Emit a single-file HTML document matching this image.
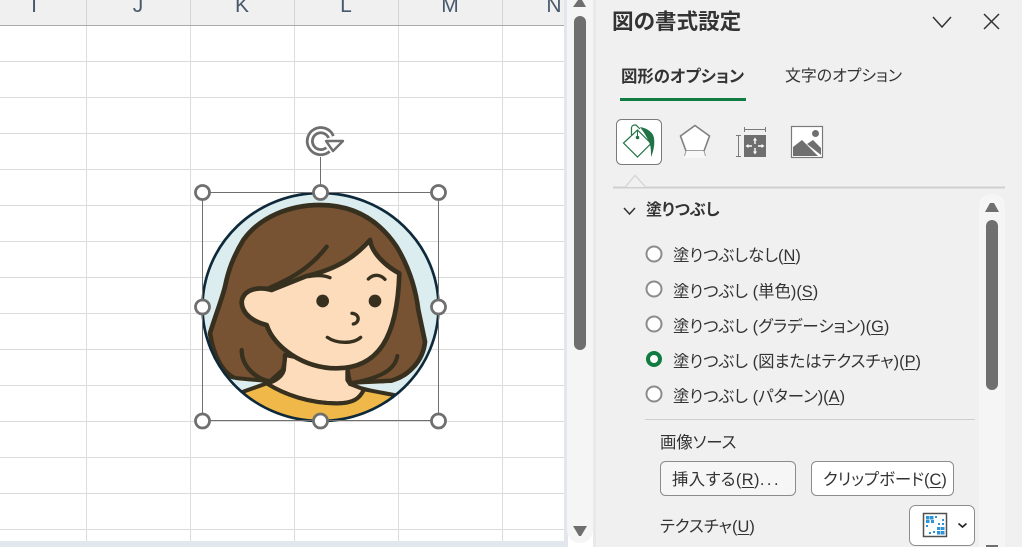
<!DOCTYPE html>
<html lang="ja"><head><meta charset="utf-8">
<style>
html,body{margin:0;padding:0;width:1022px;height:547px;overflow:hidden;background:#fff}
body{position:relative;font-family:"Liberation Sans","Noto Sans CJK JP",sans-serif;color:#333}
.a{position:absolute}
.t{position:absolute;white-space:nowrap;font-size:16.4px;line-height:20px;color:#333;font-feature-settings:"palt"}
.h{position:absolute;top:-6px;width:40px;text-align:center;font-size:21px;line-height:24px;color:#48596c}
u{text-underline-offset:2px}
svg{position:absolute;left:0;top:0}
</style></head><body>
<svg width="1022" height="547" viewBox="0 0 1022 547">
<!-- grid -->
<rect x="0" y="0" width="565" height="25" fill="#f0f0f0"/>
<g stroke="#dcdcdc" stroke-width="1">
<path d="M0 61.5H565M0 97.5H565M0 133.5H565M0 169.5H565M0 205.5H565M0 241.5H565M0 277.5H565M0 313.5H565M0 349.5H565M0 385.5H565M0 421.5H565M0 457.5H565M0 493.5H565M0 529.5H565"/>
<path d="M86.5 25V541M190.5 25V541M294.5 25V541M398.5 25V541M502.5 25V541"/>
<path stroke="#d6d6d6" d="M86.5 0V25M190.5 0V25M294.5 0V25M398.5 0V25M502.5 0V25"/>
</g>
<rect x="0" y="25" width="565" height="1" fill="#a9a9a9"/>
<!-- left scrollbar -->
<rect x="0" y="541" width="568" height="6" fill="#e2e7ee"/>
<rect x="564" y="0" width="4" height="547" fill="#e2e7ee"/>
<path d="M567 0H593V530a13 13 0 0 1-13 13a13 13 0 0 1-13-13Z" fill="#f5f5f5"/>
<rect x="593" y="0" width="3" height="547" fill="#e9e9e9"/>
<rect x="574" y="16" width="12" height="334" rx="6" fill="#6f6f6f"/>
<path d="M573 7L578 0H582L586 7Z" fill="#6f6f6f"/>
<path d="M573 526H587L581 536H579Z" fill="#6f6f6f"/>
<!-- panel -->
<rect x="596" y="0" width="426" height="547" fill="#f0f0f0"/>
<path d="M933 17L942 27L951 17" fill="none" stroke="#333" stroke-width="1.5"/>
<path d="M984 14L999 29M999 14L984 29" fill="none" stroke="#333" stroke-width="1.5"/>
<rect x="620" y="98" width="126" height="3" fill="#107c41"/>
<!-- icon buttons -->
<rect x="616.5" y="119.5" width="45" height="45" rx="5" fill="#fff" stroke="#7a7a7a"/>
<path d="M640 127C646 128 651 131 653 135C655 139 655 148 651 157C651 151 651 146 649 142C647 137 643 131 640 127Z" fill="#217346"/>
<path d="M637.500 130L651 143.500L637.500 157L623.500 143Z" fill="none" stroke="#217346" stroke-width="1.200"/>
<path d="M631.500 135V128a3 3 0 0 1 3-3H636L640 129" fill="none" stroke="#217346" stroke-width="1.200"/>
<path d="M637.500 137V130" fill="none" stroke="#217346" stroke-width="1"/>
<circle cx="637.500" cy="137.500" r="1.800" fill="#217346"/>
<path d="M695 125.500L709.500 136L704 151H686L680.500 136Z" fill="#fff" stroke="#808080" stroke-width="1.600"/>
<path d="M686 151L684 158H706L704 151Z" fill="#f8f8f8"/>
<path d="M686 151L684.500 156M704 151L705.500 156" stroke="#a0a0a0" fill="none"/>
<rect x="744" y="135" width="22" height="22" fill="#6f6f6f"/>
<path d="M744.500 127V132M765.500 127V132M744.500 129.500H765.500M736 135.500H741M736 156.500H741M738.500 135.500V156.500" stroke="#7a7a7a" fill="none"/>
<path d="M755 139V144M755 148V153M747 146H752M758 146H763" stroke="#fff" stroke-width="1.400" fill="none"/>
<path d="M755 137.500L757 140.500H753ZM755 154.500L757 151.500H753ZM745.500 146L748.500 144V148ZM764.500 146L761.500 144V148Z" fill="#fff"/>
<rect x="791.500" y="126.500" width="31" height="31" fill="#fff" stroke="#7a7a7a" stroke-width="1.200"/>
<circle cx="815.500" cy="133.500" r="3.500" fill="#6f6f6f"/>
<path d="M793 147L802 140L818 156H793Z" fill="#6f6f6f"/>
<path d="M807 144L813 140L821 148V155Z" fill="#6f6f6f"/>
<path d="M613 186.500H625L635 174.500L646 186.500H1005V188.500H613Z" fill="#cfcfcf"/>
<path d="M625.500 187L635 175.500L645.500 187" fill="#f0f0f0" stroke="#d4d4d4"/>
<path d="M624 208L629.500 214L635 208" fill="none" stroke="#333" stroke-width="1.500"/>
<!-- radios -->
<g fill="#fff" stroke="#8c8c8c" stroke-width="2">
<circle cx="654" cy="254" r="7.500"/><circle cx="654" cy="289" r="7.500"/><circle cx="654" cy="324" r="7.500"/><circle cx="654" cy="394" r="7.500"/>
</g>
<circle cx="654" cy="359" r="6" fill="#fff" stroke="#107c41" stroke-width="4"/>
<!-- right scrollbar -->
<path d="M979 204a13 10 0 0 1 26 0V547H979Z" fill="#f5f5f5"/>
<path d="M985 212L990 203H994L999 212Z" fill="#6f6f6f"/>
<rect x="986" y="220" width="12" height="170" rx="6" fill="#6f6f6f"/>
<rect x="986" y="545" width="12" height="2" fill="#6f6f6f"/>
<rect x="645" y="419" width="330" height="1" fill="#cfcfcf"/>
<!-- buttons -->
<rect x="660.500" y="461.500" width="135" height="34" rx="5" fill="#f6f6f6" stroke="#8c8c8c"/>
<rect x="811.500" y="461.500" width="142" height="34" rx="5" fill="#fff" stroke="#8c8c8c"/>
<rect x="909.500" y="505.500" width="65" height="40" rx="6" fill="#fff" stroke="#8c8c8c"/>
<rect x="923.500" y="513.500" width="23" height="23" fill="#fff" stroke="#505050" stroke-width="1.500"/>
<g fill="#2f93d8">
<rect x="926" y="516" width="3.500" height="3.500"/><rect x="930" y="516" width="3.500" height="3.500"/><rect x="935" y="516" width="2" height="2"/><rect x="926" y="520" width="3.500" height="3"/><rect x="931" y="520" width="3" height="3"/><rect x="926" y="525" width="2" height="2"/>
<rect x="942" y="519" width="2" height="2"/><rect x="938" y="523" width="2" height="2"/><rect x="942" y="523" width="2" height="2"/><rect x="937" y="527" width="3.500" height="3"/><rect x="941" y="527" width="3.500" height="3"/><rect x="933" y="531" width="2" height="2"/><rect x="937" y="531" width="3.500" height="3.500"/><rect x="941" y="531" width="3.500" height="3.500"/><rect x="929" y="532" width="2" height="2"/>
</g>
<path d="M958.500 523.500L962.500 527L966.500 523.500" fill="none" stroke="#222" stroke-width="1.600"/>
<!-- rotate handle -->
<path d="M320.500 157V185" stroke="#6f6f6f" stroke-width="1"/>
<path d="M328 149.500A11 11 0 1 1 331 137" fill="none" stroke="#6f6f6f" stroke-width="8"/>
<path d="M328 149.500A11 11 0 1 1 331 137" fill="none" stroke="#fff" stroke-width="2.400"/>
<path d="M326 141H343L333 151Z" fill="#fff" stroke="#6f6f6f" stroke-width="2.400" stroke-linejoin="round"/>
<!-- picture -->
<defs><clipPath id="c"><ellipse cx="391.500" cy="561" rx="354" ry="342"/></clipPath></defs>
<g transform="translate(190 120) scale(.33333)">
<ellipse cx="391.500" cy="561" rx="354" ry="342" fill="#dcedef"/>
<g clip-path="url(#c)" stroke-linejoin="round" stroke-linecap="round">
<path d="M160 815L230 790L300 800H480L520 805L612 825L620 930H150Z" fill="#f0b849" stroke="#37301f" stroke-width="10"/>
<path d="M60 640C75 590 95 540 105 500C115 450 130 410 160 360C210 290 300 255 390 255C480 255 560 290 620 380C650 430 675 490 685 570L705 665C700 720 660 765 605 782L480 790L470 745H285L240 785L135 775C100 760 70 710 60 640Z" fill="#775333" stroke="#37301f" stroke-width="14"/>
<path d="M105 774L145 781L222 788L160 812L120 790Z" fill="#dcedef"/>
<path d="M495 794L605 789L650 774L640 810L612 825L520 800Z" fill="#dcedef"/>
<path d="M285 705L282 750C275 775 250 785 230 790C285 825 360 850 440 850C490 850 510 835 522 808L480 792L472 742Z" fill="#fddcbc" stroke="#37301f" stroke-width="12"/>
<path d="M160 815L230 790C285 825 360 850 440 850C490 850 510 835 522 808L612 825" fill="none" stroke="#37301f" stroke-width="12"/>
<path d="M245 510C200 498 160 510 155 545C155 582 190 605 230 615C250 680 340 745 440 745C560 745 622 660 628 460C590 440 545 400 540 360C500 405 450 445 350 468L245 510Z" fill="#fddcbc" stroke="#37301f" stroke-width="14"/>
<path d="M410 380C370 432 320 470 235 505" fill="none" stroke="#37301f" stroke-width="13"/>
<path d="M155 690C155 740 200 780 245 785C275 775 285 740 285 705" fill="none" stroke="#37301f" stroke-width="13"/>
<path d="M622 708C615 750 570 775 480 790M472 745L472 780L480 792M605 782C640 770 655 760 665 745" fill="none" stroke="#37301f" stroke-width="12"/>
<path d="M355 470C380 465 400 465 420 473M535 477C550 462 570 462 585 478" fill="none" stroke="#37301f" stroke-width="10"/>
<path d="M486 580C510 582 510 608 490 612M412 652C440 672 490 672 512 652" fill="none" stroke="#37301f" stroke-width="10"/>
<circle cx="398" cy="543" r="19" fill="#37301f"/><circle cx="555" cy="543" r="19" fill="#37301f"/>
</g>
<ellipse cx="391.500" cy="561" rx="354" ry="342" fill="none" stroke="#0e2a3a" stroke-width="8"/>
</g>
<rect x="202.500" y="192.500" width="236" height="228" fill="none" stroke="#6f6f6f" stroke-width="1"/>
<g fill="#fff" stroke="#6f6f6f" stroke-width="2.800">
<circle cx="202.500" cy="192.500" r="7"/><circle cx="320.500" cy="192.500" r="7"/><circle cx="438.500" cy="192.500" r="7"/>
<circle cx="202.500" cy="307" r="7"/><circle cx="438.500" cy="307" r="7"/>
<circle cx="202.500" cy="421" r="7"/><circle cx="320.500" cy="421" r="7"/><circle cx="438.500" cy="421" r="7"/>
</g>
</svg>
<div class="a" style="left:0;top:0;width:565px;height:25px;overflow:hidden">
<div class="h" style="left:14px">I</div><div class="h" style="left:118px">J</div><div class="h" style="left:222px">K</div><div class="h" style="left:326px">L</div><div class="h" style="left:430px">M</div><div class="h" style="left:534px">N</div>
</div>
<div class="t" style="left:612px;top:9px;font-size:21.6px;line-height:26px;font-weight:700">図の書式設定</div>
<div class="t" style="left:621px;top:67px;font-weight:700">図形のオプション</div>
<div class="t" style="left:785px;top:67px;font-size:15.9px">文字のオプション</div>
<div class="t" style="left:646px;top:201px;font-size:16px;font-weight:700">塗りつぶし</div>
<div class="t" style="left:673px;top:246px">塗りつぶしなし(<u>N</u>)</div>
<div class="t" style="left:673px;top:282px">塗りつぶし (単色)(<u>S</u>)</div>
<div class="t" style="left:673px;top:317px">塗りつぶし (グラデーション)(<u>G</u>)</div>
<div class="t" style="left:673px;top:352px">塗りつぶし (図またはテクスチャ)(<u>P</u>)</div>
<div class="t" style="left:673px;top:387px">塗りつぶし (パターン)(<u>A</u>)</div>
<div class="t" style="left:660px;top:433px">画像ソース</div>
<div class="t" style="left:672px;top:470px;letter-spacing:.4px">挿入する(<u>R</u>)<span style="letter-spacing:2.5px">...</span></div>
<div class="t" style="left:823px;top:470px">クリップボード(<u>C</u>)</div>
<div class="t" style="left:660px;top:517px">テクスチャ(<u>U</u>)</div>
</body></html>
